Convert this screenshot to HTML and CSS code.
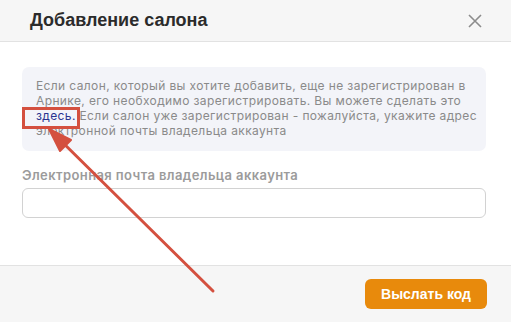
FILE: index.html
```html
<!DOCTYPE html>
<html lang="ru">
<head>
<meta charset="UTF-8">
<meta name="viewport" content="width=device-width, initial-scale=1.0">
<title>Добавление салона</title>
<link rel="stylesheet" href="styles.css">
</head>
<body>

<div class="modal">
  <div class="modal-header">
    <h2 class="modal-title">Добавление салона</h2>
    <button class="close-btn" type="button" aria-label="Закрыть">
      <svg width="14" height="14" viewBox="0 0 14 14"><path d="M1 1L13 13M13 1L1 13" stroke="#8c8c8c" stroke-width="1.6" fill="none"/></svg>
    </button>
  </div>

  <div class="modal-body">
    <div class="info-box">
      Если салон, который вы хотите добавить, еще не зарегистрирован в Арнике, его необходимо зарегистрировать. Вы можете сделать это <a href="#" class="info-link">здесь.</a> Если салон уже зарегистрирован - пожалуйста, укажите адрес электронной почты владельца аккаунта
    </div>

    <div class="form-group">
      <label for="email">Электронная почта владельца аккаунта</label>
      <input type="email" id="email" name="email">
    </div>
  </div>

  <div class="modal-footer">
    <button class="send-btn" type="button">Выслать код</button>
  </div>

  <!-- annotation overlay -->
  <svg class="annotation" width="511" height="322" viewBox="0 0 511 322">
    <rect x="23.5" y="108.5" width="55" height="19" fill="none" stroke="#d4503f" stroke-width="3"/>
    <path d="M213 291L51 131" stroke="#d4503f" stroke-width="3" stroke-linecap="round" fill="none"/>
    <path d="M49 129L71 140L60 151Z" fill="#d4503f" stroke="#d4503f" stroke-width="2" stroke-linejoin="round"/>
  </svg>
</div>

</body>
</html>
```

FILE: styles.css
```css
/* modal styles */
html, body {
  margin: 0;
  height: 100%;
  background-color: #ffffff;
}

.modal {
  position: relative;
  width: 511px;
  height: 322px;
  display: flex;
  flex-direction: column;
  font-family: Inter, "Noto Sans", sans-serif;
  overflow: hidden;
}

.modal-header {
  height: 42px;
  box-sizing: border-box;
  background-color: #f6f6f6;
  border-bottom: 1px solid #e2e2e2;
  display: flex;
  align-items: center;
  justify-content: space-between;
  padding: 0 29px 0 30px;
}

.modal-title {
  margin: 0;
  font-family: "Liberation Sans", Arial, sans-serif;
  font-size: 18px;
  font-weight: bold;
  color: #2b2b2b;
}

.close-btn {
  border: none;
  background: none;
  padding: 0;
  display: flex;
  cursor: pointer;
}

.modal-body {
  flex: 1;
  padding: 25px 25px 0 22px;
}

.info-box {
  background-color: #f3f4f9;
  border-radius: 7px;
  padding: 11px 8px 13px 14px;
  font-size: 12px;
  letter-spacing: 0.38px;
  line-height: 15px;
  color: #8a8a8a;
}

.info-link {
  color: #2a3490;
  text-decoration: none;
}

.form-group {
  margin-top: 16px;
}

label {
  display: block;
  margin-bottom: 5px;
  font-size: 13px;
  font-weight: 600;
  letter-spacing: 0.4px;
  color: #9b9b9b;
}

input[type='email'] {
  width: 100%;
  height: 30px;
  box-sizing: border-box;
  border: 1px solid #d2d2d2;
  border-radius: 6px;
  padding: 0 10px;
}

.modal-footer {
  height: 56px;
  background-color: #f6f6f6;
  border-top: 1px solid #e2e2e2;
  display: flex;
  align-items: center;
  justify-content: flex-end;
  padding: 0 24px;
}

.send-btn {
  width: 122px;
  height: 30px;
  border: none;
  border-radius: 6px;
  background-color: #e88a0c;
  color: #ffffff;
  font-family: "Liberation Sans", Arial, sans-serif;
  font-size: 14px;
  font-weight: bold;
  cursor: pointer;
}

.annotation {
  position: absolute;
  left: 0;
  top: 0;
  pointer-events: none;
}
```
